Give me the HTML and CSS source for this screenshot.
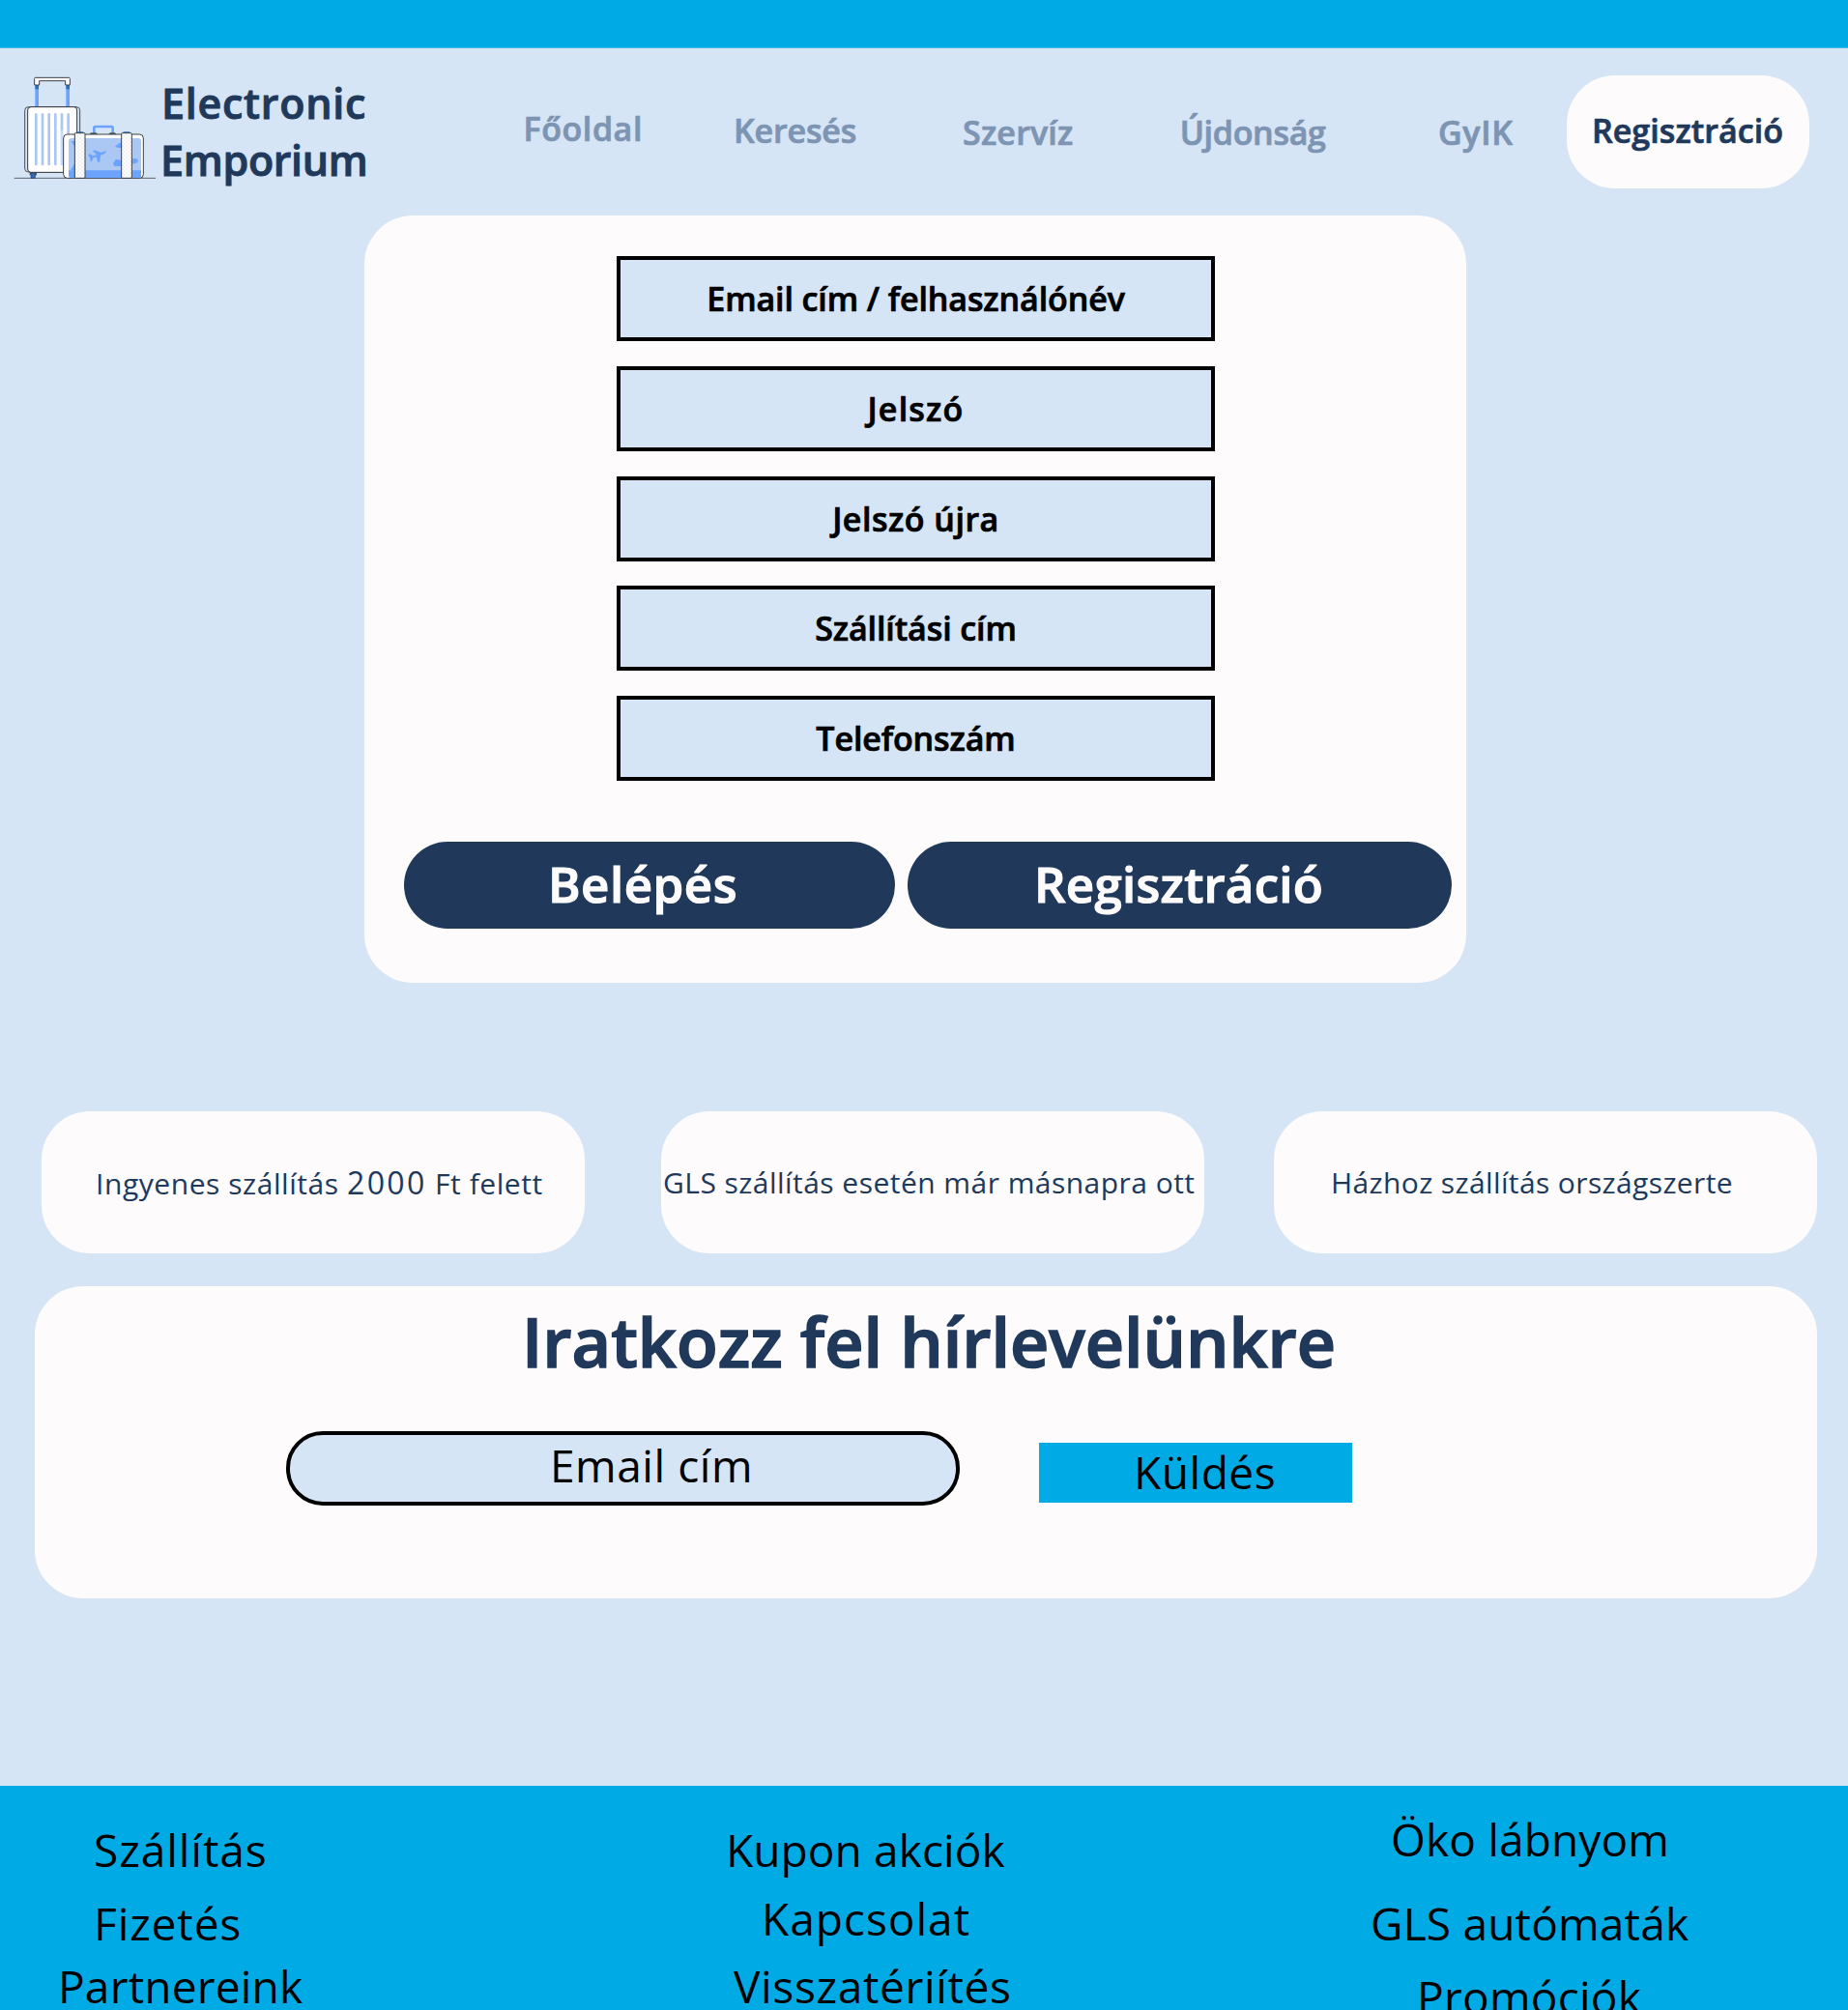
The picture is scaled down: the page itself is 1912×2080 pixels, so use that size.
FILE: index.html
```html
<!DOCTYPE html>
<html lang="hu">
<head>
<meta charset="utf-8">
<title>Electronic Emporium</title>
<link rel="stylesheet" href="styles.css">
</head>
<body>
<div class="topbar"></div>
<header class="header">
  <svg class="logo" viewBox="0 0 465 360" aria-hidden="true">
    <defs>
      <pattern id="dots" width="12" height="12" patternUnits="userSpaceOnUse">
        <rect width="12" height="12" fill="#fdfdfd"/>
        <circle cx="3" cy="3" r="1.6" fill="#c4c6ca"/><circle cx="9" cy="9" r="1.6" fill="#c4c6ca"/>
      </pattern>
      <clipPath id="panel"><rect x="183" y="219" width="225" height="124" rx="10"/></clipPath>
    </defs>
    <path d="M14 343H453" stroke="#5d646e" stroke-width="3"/>
    <path d="M79 60h11v62H79zM175 60h11v62h-11z" fill="#6ba3fd"/>
    <path d="M79 53h11v14H79zM175 53h11v14h-11z" fill="#2c6dc4"/>
    <path d="M77 54V34q0-3 3-3h104q3 0 3 3v20h-14V41H92v13z" fill="#fff" stroke="#3c3f45" stroke-width="3"/>
    <path d="M62 325h22v9H62z" fill="#555a63"/>
    <path d="M66 327h13v16H66z" fill="#2c6dc4" stroke="#2c3c55" stroke-width="2"/>
    <rect x="47" y="122" width="171" height="202" rx="11" fill="#d5e5f5" stroke="#4a4e56" stroke-width="3"/>
    <rect x="56" y="122" width="153" height="203" rx="10" fill="#fff" stroke="#33363c" stroke-width="3"/>
    <path d="M82 145v155M102 145v155M122 145v155M142 145v155M162 145v155M182 145v60" stroke="#abc8f5" stroke-width="8" stroke-linecap="round"/>
    <path d="M150 195h16v128h-16z" fill="url(#dots)" opacity=".4"/>
    <path d="M262 204v-17q0-4 4-4h50q4 0 4 4v17" fill="none" stroke="#6ba3fd" stroke-width="8"/>
    <path d="M249 207q0-5 5-5h13q5 0 5 5zM308 207q0-5 5-5h12q5 0 5 5z" fill="#55595f"/>
    <rect x="167" y="207" width="248" height="136" rx="12" fill="#fff" stroke="#3c3f45" stroke-width="3"/>
    <g clip-path="url(#panel)">
      <path d="M183 219h225v124H183z" fill="#abc8f5"/>
      <path d="M183 319h225v24H183z" fill="#6ba3fd"/>
      <path d="M191 228h13v20zM203 295v24h-14z" fill="#6ba3fd"/>
      <path d="M327 245l12-10 10-2v15q-12 3-22-3zM329 284l18 4v18l-22 0-4-8zM379 283q18-4 19 6 0 10-19 10z" fill="#6ba3fd"/>
      <path d="M243 270l7-2 8 6 12-3-12-12 6-3 20 8 13-5q7 1-3 8l-12 5-2 20-6 3-5-18-11 4-3 10-4 1-2-12z" fill="#6ba3fd"/>
    </g>
    <path d="M205 203q1-4 5-4h15q4 0 5 4zM351 203q1-4 5-4h14q4 0 5 4z" fill="#2c6dc4"/>
    <rect x="202" y="203" width="32" height="140" rx="3" fill="url(#dots)" stroke="#3c3f45" stroke-width="3"/>
    <rect x="347" y="203" width="32" height="140" rx="3" fill="url(#dots)" stroke="#3c3f45" stroke-width="3"/>
  </svg>
  <div class="brand"><span class="brand-first">Electronic</span><span class="brand-second">Emporium</span></div>
  <a class="nav nav-home">Főoldal</a>
  <a class="nav nav-search">Keresés</a>
  <a class="nav nav-service">Szervíz</a>
  <a class="nav nav-news">Újdonság</a>
  <a class="nav nav-faq">GyIK</a>
  <a class="nav nav-register">Regisztráció</a>
</header>
<main>
  <section class="card register">
    <div class="fields">
      <div class="field">Email cím / felhasználónév</div>
      <div class="field spaced">Jelszó</div>
      <div class="field semi">Jelszó újra</div>
      <div class="field">Szállítási cím</div>
      <div class="field">Telefonszám</div>
    </div>
    <div class="actions">
      <div class="button login">Belépés</div>
      <div class="button signup">Regisztráció</div>
    </div>
  </section>
  <section class="features">
    <div class="card feature free">Ingyenes szállítás <span class="amount">2000</span> Ft felett</div>
    <div class="card feature gls">GLS szállítás esetén már másnapra ott</div>
    <div class="card feature home">Házhoz szállítás országszerte</div>
  </section>
  <section class="card newsletter">
    <h1>Iratkozz fel hírlevelünkre</h1>
    <div class="subscribe">
      <div class="email">Email cím</div>
      <div class="send">Küldés</div>
    </div>
  </section>
</main>
<footer class="footer">
  <div class="col col-left"><a class="f-shipping">Szállítás</a><a class="f-payment">Fizetés</a><a class="f-partners">Partnereink</a></div>
  <div class="col col-mid"><a class="f-coupon">Kupon akciók</a><a class="f-contact">Kapcsolat</a><a class="f-refund">Visszatériítés</a></div>
  <div class="col col-right"><a class="f-eco">Öko lábnyom</a><a class="f-gls">GLS autómaták</a><a class="f-promo">Promóciók</a></div>
</footer>
</body>
</html>
```
FILE: styles.css
```css
* { box-sizing: border-box; }
body {
  margin: 0;
  width: 1912px;
  height: 2080px;
  overflow: hidden;
  background: #d5e5f5;
  color: #000;
  font-family: "Open Sans", "Noto Sans", sans-serif;
  white-space: nowrap;
}
.topbar { height: 50px; background: #00abe5; border-bottom: 1px solid #3fbdeb; }
.card { background: #fdfbfc; border-radius: 50px; }
.brand, .nav, .field, .button, h1 { -webkit-text-stroke: .022em currentColor; }

.header {
  display: grid;
  grid-template-columns: 166px 375.6px 217.4px 237px 224.7px 267.3px 133px 251px;
  height: 173px;
  align-items: start;
}
.logo { width: 155px; height: 120px; margin: 20px 0 0 10px; }
.brand {
  display: flex;
  flex-direction: column;
  margin-top: 27px;
  color: #20395b;
  font-size: 43px;
  font-weight: 600;
  line-height: 59px;
}
.brand-first { padding-left: 1px; letter-spacing: .75px; }
.brand-second { letter-spacing: -.3px; }
.nav { color: #7d94b3; font-size: 34px; font-weight: 600; line-height: 46px; }
.nav-home { margin-top: 60px; letter-spacing: .55px; }
.nav-search { margin-top: 62px; letter-spacing: -.15px; }
.nav-service { margin-top: 64px; letter-spacing: .2px; }
.nav-news { margin-top: 64px; letter-spacing: -.3px; }
.nav-faq { margin-top: 64px; letter-spacing: .7px; }
.nav-register {
  margin-top: 28px;
  height: 117px;
  padding: 34px 0 0 26px;
  border-radius: 50px;
  background: #fdfbfc;
  color: #20395b;
  letter-spacing: .05px;
}

.register { width: 1140px; height: 794px; margin-left: 377px; padding-top: 42px; }
.fields { display: flex; flex-direction: column; gap: 25.75px; width: 619px; margin-left: 261px; }
.field {
  height: 88px;
  border: 4px solid #000;
  background: #d5e5f5;
  font-size: 34px;
  font-weight: 600;
  line-height: 81px;
  text-align: center;
  letter-spacing: -.1px;
}
.spaced { letter-spacing: 1.2px; }
.semi { letter-spacing: .5px; }
.actions { display: flex; gap: 13px; margin: 63px 0 0 41px; }
.button {
  height: 90px;
  border-radius: 45px;
  background: #20395b;
  color: #fdfbfc;
  font-size: 51px;
  font-weight: 600;
  line-height: 87px;
}
.login { width: 508px; padding-left: 149px; letter-spacing: .5px; }
.signup { width: 563px; padding-left: 131px; letter-spacing: .25px; }

.features { display: flex; justify-content: space-between; margin: 133px 32px 0 43px; }
.feature { width: 562px; height: 147px; color: #20395b; font-size: 30px; line-height: 147px; }
.free { padding-left: 56px; letter-spacing: .55px; }
.amount { font-size: 32px; letter-spacing: 2.4px; }
.gls { padding-left: 2px; margin-left: 7px; letter-spacing: .46px; }
.home { padding-left: 59px; letter-spacing: .38px; }

.newsletter { width: 1844px; height: 323px; margin: 34px 0 0 36px; padding-top: 10px; }
h1 {
  margin: 0 0 46px;
  padding-left: 504px;
  color: #20395b;
  font-size: 70px;
  font-weight: 600;
  line-height: 94px;
  letter-spacing: 0;
}
.subscribe { display: flex; gap: 82px; padding-left: 260px; font-size: 46px; }
.email {
  width: 697px;
  height: 77px;
  padding-left: 269px;
  border: 4px solid #000;
  border-radius: 38px;
  background: #d5e5f5;
  line-height: 63px;
  letter-spacing: .55px;
}
.send {
  width: 324px;
  height: 62px;
  margin-top: 12px;
  padding-left: 98px;
  background: #00abe5;
  line-height: 60px;
  letter-spacing: .55px;
}

.footer {
  display: grid;
  grid-template-columns: 640px 640px 632px;
  height: 232px;
  margin-top: 194px;
  overflow: hidden;
  background: #00abe5;
  font-size: 46px;
  line-height: 60px;
}
.col { display: flex; flex-direction: column; }
.col-left, .col-mid { padding-top: 36px; }
.col-right { padding-top: 25px; }
.f-shipping { padding-left: 97px; letter-spacing: .95px; }
.f-payment { padding-left: 97px; margin-top: 16px; letter-spacing: .9px; }
.f-partners { padding-left: 60px; margin-top: 5px; letter-spacing: .2px; }
.f-coupon { padding-left: 111px; letter-spacing: .1px; }
.f-contact { padding-left: 148px; margin-top: 11px; letter-spacing: 1px; }
.f-refund { padding-left: 119px; margin-top: 10px; letter-spacing: .65px; }
.f-eco { padding-left: 159px; letter-spacing: .15px; }
.f-gls { padding-left: 138px; margin-top: 27px; letter-spacing: .2px; }
.f-promo { padding-left: 186px; margin-top: 16px; letter-spacing: .25px; }
```
